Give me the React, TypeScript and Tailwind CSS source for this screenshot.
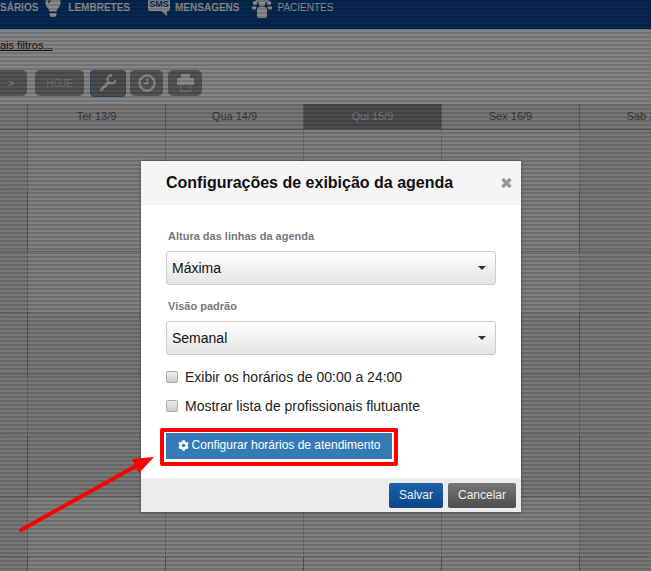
import { FaCog, FaLightbulb } from 'react-icons/fa';

const days = ['', 'Ter 13/9', 'Qua 14/9', 'Qui 15/9', 'Sex 16/9', 'Sab 17/9'];

// row height 61, dotted and solid lines alternate; middle block is closed hours
const rows = [
  { h: 'h-[61px]', line: 'border-dotted', open: true },
  { h: 'h-[61px]', line: 'border-solid', open: true },
  { h: 'h-[61px]', line: 'border-dotted', open: true },
  { h: 'h-[62px]', line: 'border-solid', open: false },
  { h: 'h-[60px]', line: 'border-dotted', open: false },
  { h: 'h-[62px]', line: 'border-solid', open: false },
  { h: 'h-[60px]', line: 'border-dotted', open: true },
  { h: 'h-[61px]', line: 'border-solid', open: true },
];

function Select({ value }: { value: string }) {
  return (
    <div className="flex h-[34px] w-[330px] items-center justify-between rounded-[3px] border border-[#ccc] bg-gradient-to-b from-white to-[#e4e4e4] pl-[5px] pr-[9px] text-sm text-[#111]">
      <span>{value}</span>
      <span className="h-0 w-0 border-x-[4px] border-t-[4px] border-x-transparent border-t-[#333]" />
    </div>
  );
}

function Check({ label }: { label: string }) {
  return (
    <label className="flex h-[20px] items-center gap-[7px] text-sm text-[#222]">
      <input
        type="checkbox"
        className="h-[12px] w-[12px] appearance-none rounded-[2px] border border-[#aaa] bg-gradient-to-b from-[#eee] to-[#ccc]"
      />
      {label}
    </label>
  );
}

function PeopleIcon() {
  return (
    <svg width="20" height="18" viewBox="0 0 20 18" fill="currentColor">
      <circle cx="10" cy="3" r="3.6" />
      <circle cx="3" cy="3" r="2.2" />
      <circle cx="17" cy="3" r="2.2" />
      <circle cx="5.5" cy="0.5" r="1.8" />
      <circle cx="14.5" cy="0.5" r="1.8" />
      <path d="M0 6.500h4.500l-.5 3H0zM20 6.500h-4.500l.5 3h4z" />
      <path d="M5 9.500c0-1.500 1-2.500 2.500-2.500h5c1.500 0 2.500 1 2.500 2.500V16c0 1-.8 2-2 2H7c-1.200 0-2-1-2-2z" />
    </svg>
  );
}

function WrenchIcon() {
  return (
    <svg width="18" height="18" viewBox="0 0 18 18" fill="none" stroke="currentColor">
      <path d="M13 1.500A4 4 0 1 0 16.500 6" strokeWidth="2.200" />
      <path d="M9.500 8.500L2.500 15.500" strokeWidth="3" strokeLinecap="round" />
    </svg>
  );
}

function ClockIcon() {
  return (
    <svg width="18" height="18" viewBox="0 0 18 18" fill="none" stroke="currentColor">
      <circle cx="9" cy="9" r="7.500" strokeWidth="2.400" />
      <path d="M9.500 4.500V9.500H5.500" strokeWidth="1.600" />
    </svg>
  );
}

function PrintIcon() {
  return (
    <svg width="17" height="18" viewBox="0 0 17 18" fill="currentColor">
      <path d="M4 0h9v4H4z" />
      <path d="M0 5.500c0-.8.600-1.500 1.500-1.500h14c.9 0 1.500.7 1.500 1.500V11h-17z" />
      <path d="M3 11h1.200v5.500h8.600V11H14v7H3z" opacity="0.45" />
    </svg>
  );
}

export default function App() {
  return (
    <div className="relative h-[571px] w-[651px] overflow-hidden bg-[#f2f2f2] font-['Liberation_Sans',sans-serif]">
      {/* Top nav, page is scrolled so the icons are cut */}
      <div className="flex h-[29px] items-start overflow-hidden bg-[#0b4a96] text-[10px] leading-[16px] text-white">
        <span className="font-bold">SÁRIOS</span>
        <FaLightbulb className="ml-[4px] mt-[-5px] text-[22px]" />
        <span className="ml-[4px] font-bold">LEMBRETES</span>
        <div className="relative ml-[18px] mt-[-6px] h-[22px] w-[22px]">
          <div className="h-[17px] w-[22px] rounded-[2px] bg-white text-center text-[9px] font-bold leading-[20px] text-[#0b4a96]">
            SMS
          </div>
          <span className="absolute bottom-0 right-[3px] h-0 w-0 border-l-[7px] border-t-[6px] border-l-transparent border-t-white" />
        </div>
        <span className="ml-[5px] font-bold">MENSAGENS</span>
        <div className="ml-[13px]">
          <PeopleIcon />
        </div>
        <span className="ml-[5px]">PACIENTES</span>
      </div>

      {/* Filters and toolbar */}
      <div className="flex h-[75px] flex-col bg-[#f6f6f6]">
        <a className="mt-[8px] self-start text-[11px] leading-[16px] text-[#222] underline">ais filtros...</a>
        <div className="mt-[17px] flex h-[26px] items-center text-white">
          <div className="ml-[-5px] flex h-[26px] w-[32px] items-center justify-center rounded-[5px] bg-[#9b9b9b] text-[10px]">
            &gt;
          </div>
          <div className="ml-[8px] flex h-[26px] w-[49px] items-center justify-center rounded-[5px] bg-[#9b9b9b] text-[10px] text-[#d0d0d0]">
            HOJE
          </div>
          <div className="ml-[6px] flex h-[27px] w-[36px] items-center justify-center rounded-[4px] border border-[#4f86cc] bg-[#8f8f8f]">
            <WrenchIcon />
          </div>
          <div className="ml-[4px] flex h-[26px] w-[33px] items-center justify-center rounded-[5px] bg-[#9b9b9b]">
            <ClockIcon />
          </div>
          <div className="ml-[5px] flex h-[26px] w-[34px] items-center justify-center rounded-[5px] bg-[#9b9b9b]">
            <PrintIcon />
          </div>
        </div>
      </div>

      {/* Week calendar */}
      <div className="grid h-[26px] w-[720px] grid-cols-[28px_138px_138px_138px_138px_138px] border-b border-[#aaa] bg-[#dedede] text-[11px] text-[#666]">
        {days.map((d, i) => (
          <div
            key={i}
            className={`flex items-center justify-center whitespace-nowrap border-r border-[#aaa] ${i === 3 ? 'bg-[#8c8c8c] text-[#e0e0e0]' : ''}`}
          >
            {d}
          </div>
        ))}
      </div>
      {rows.map((r, i) => (
        <div key={i} className={`grid w-[720px] grid-cols-[28px_138px_138px_138px_138px_138px] ${r.h}`}>
          {[0, 1, 2, 3, 4, 5].map((c) => (
            <div
              key={c}
              className={`border-b border-r border-b-[#b8b8b8] border-r-[#999] ${r.line} ${r.open && c > 0 && c < 5 ? 'bg-[#ececec]' : 'bg-[#dedede]'}`}
            />
          ))}
        </div>
      ))}

      {/* Striped backdrop */}
      <div className="absolute inset-0 bg-[repeating-linear-gradient(to_bottom,rgba(0,0,0,0.54)_0px,rgba(0,0,0,0.54)_2px,rgba(0,0,0,0.46)_2px,rgba(0,0,0,0.46)_4px)]" />

      {/* Modal */}
      <div className="absolute left-[141px] top-[161px] flex h-[351px] w-[380px] flex-col bg-white shadow-[0_0_3px_rgba(0,0,0,0.4)]">
        <div className="flex h-[44px] items-center justify-between border-b border-[#eee] bg-[#f5f5f5] pl-[25px] pr-[9px]">
          <h3 className="text-base font-bold text-[#111]">Configurações de exibição da agenda</h3>
          <svg className="mt-[1px]" width="11" height="12" viewBox="0 0 11 12" stroke="#999" strokeWidth="3.400">
            <path d="M1.500 2L9.500 10M9.500 2L1.500 10" />
          </svg>
        </div>
        <div className="flex flex-1 flex-col px-[25px]">
          <label className="ml-[2px] mt-[24px] text-[11px] font-bold leading-[14px] text-[#777]">
            Altura das linhas da agenda
          </label>
          <div className="mt-[8px]">
            <Select value="Máxima" />
          </div>
          <label className="ml-[2px] mt-[14px] text-[11px] font-bold leading-[14px] text-[#777]">Visão padrão</label>
          <div className="mt-[8px]">
            <Select value="Semanal" />
          </div>
          <div className="mt-[12px]">
            <Check label="Exibir os horários de 00:00 a 24:00" />
          </div>
          <div className="mt-[9px]">
            <Check label="Mostrar lista de profissionais flutuante" />
          </div>
          {/* Red annotation box round the button */}
          <div className="ml-[-6px] mt-[12px] w-[238px] rounded-[2px] border-[4px] border-[#f00] px-[2px] pb-[3px] pt-px">
            <button className="flex h-[26px] w-full items-center justify-center gap-[3px] bg-[#337ab7] pb-[2px] text-xs text-white">
              <FaCog className="text-[11px]" />
              Configurar horários de atendimento
            </button>
          </div>
        </div>
        <div className="flex h-[34px] items-center justify-end gap-[5px] bg-[#ececec] pr-[5px]">
          <button className="h-[25px] w-[54px] rounded-[2px] bg-gradient-to-b from-[#1d64a8] to-[#0a4585] text-xs text-[#eef]">
            Salvar
          </button>
          <button className="h-[25px] w-[68px] rounded-[2px] bg-gradient-to-b from-[#777] to-[#4c4c4c] text-xs text-[#eee]">
            Cancelar
          </button>
        </div>
      </div>

      {/* Arrow annotation */}
      <svg className="absolute left-0 top-0" width="651" height="571" fill="none">
        <line x1="21" y1="530" x2="136" y2="466" stroke="#f00" strokeWidth="4" strokeLinecap="round" />
        <path d="M132 459L154 457L139 473Z" fill="#f00" />
      </svg>
    </div>
  );
}
